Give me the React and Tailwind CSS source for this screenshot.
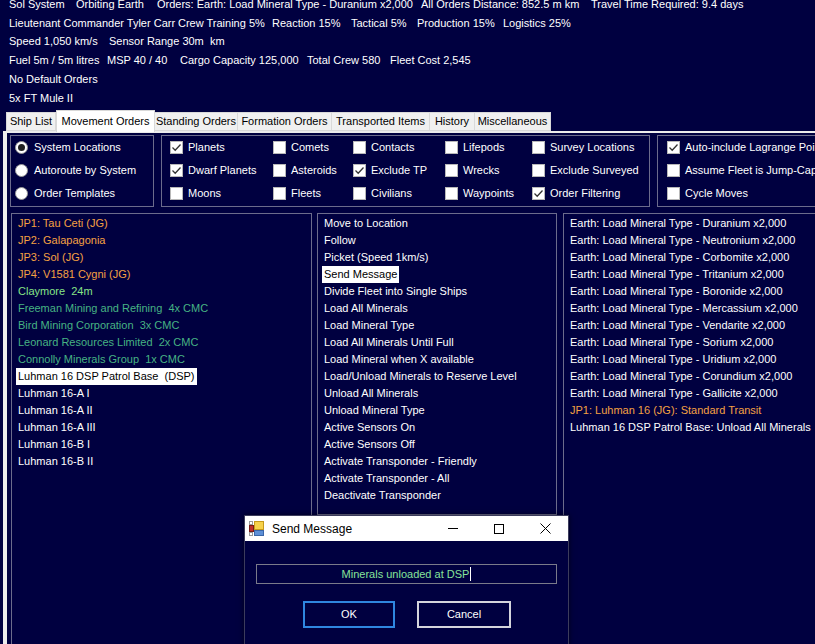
const headerLines = [
  [
    ['Sol System', 'w-[67px]'],
    ['Orbiting Earth', 'w-[81px]'],
    ['Orders: Earth: Load Mineral Type - Duranium x2,000', 'w-[264px]'],
    ['All Orders Distance: 852.5 m km', 'w-[170px]'],
    ['Travel Time Required: 9.4 days', ''],
  ],
  [
    ['Lieutenant Commander Tyler Carr', 'w-[169px]'],
    ['Crew Training 5%', 'w-[94px]'],
    ['Reaction 15%', 'w-[79px]'],
    ['Tactical 5%', 'w-[66px]'],
    ['Production 15%', 'w-[86px]'],
    ['Logistics 25%', ''],
  ],
  [
    ['Speed 1,050 km/s', 'w-[100px]'],
    ['Sensor Range 30m  km', ''],
  ],
  [
    ['Fuel 5m / 5m litres', 'w-[98px]'],
    ['MSP 40 / 40', 'w-[73px]'],
    ['Cargo Capacity 125,000', 'w-[127px]'],
    ['Total Crew 580', 'w-[83px]'],
    ['Fleet Cost 2,545', ''],
  ],
  [['No Default Orders', '']],
  [['5x FT Mule II', '']],
];

const tabs = [
  ['Ship List', 'w-[50px]'],
  ['Movement Orders', 'w-[99px]'],
  ['Standing Orders', 'w-[83px]'],
  ['Formation Orders', 'w-[94px]'],
  ['Transported Items', 'w-[98px]'],
  ['History', 'w-[45px]'],
  ['Miscellaneous', 'w-[76px]'],
];

const checkCols = [
  ['w-[103px]', [['Planets', true], ['Dwarf Planets', true], ['Moons', false]]],
  ['w-[80px]', [['Comets', false], ['Asteroids', false], ['Fleets', false]]],
  ['w-[92px]', [['Contacts', false], ['Exclude TP', true], ['Civilians', false]]],
  ['w-[87px]', [['Lifepods', false], ['Wrecks', false], ['Waypoints', false]]],
  ['', [['Survey Locations', false], ['Exclude Surveyed', false], ['Order Filtering', true]]],
];

const ORANGE = 'text-[#f5a142]';
const LIME = 'text-[#86e486]';
const TEAL = 'text-[#46b383]';

const locations = [
  ['JP1: Tau Ceti (JG)', ORANGE],
  ['JP2: Galapagonia', ORANGE],
  ['JP3: Sol (JG)', ORANGE],
  ['JP4: V1581 Cygni (JG)', ORANGE],
  ['Claymore  24m', LIME],
  ['Freeman Mining and Refining  4x CMC', TEAL],
  ['Bird Mining Corporation  3x CMC', TEAL],
  ['Leonard Resources Limited  2x CMC', TEAL],
  ['Connolly Minerals Group  1x CMC', TEAL],
  ['Luhman 16 DSP Patrol Base  (DSP)', 'text-white', true],
  ['Luhman 16-A I', 'text-white'],
  ['Luhman 16-A II', 'text-white'],
  ['Luhman 16-A III', 'text-white'],
  ['Luhman 16-B I', 'text-white'],
  ['Luhman 16-B II', 'text-white'],
];

const actions = [
  'Move to Location',
  'Follow',
  'Picket (Speed 1km/s)',
  'Send Message',
  'Divide Fleet into Single Ships',
  'Load All Minerals',
  'Load Mineral Type',
  'Load All Minerals Until Full',
  'Load Mineral when X available',
  'Load/Unload Minerals to Reserve Level',
  'Unload All Minerals',
  'Unload Mineral Type',
  'Active Sensors On',
  'Active Sensors Off',
  'Activate Transponder - Friendly',
  'Activate Transponder - All',
  'Deactivate Transponder',
];

const minerals = [
  'Duranium', 'Neutronium', 'Corbomite', 'Tritanium', 'Boronide', 'Mercassium',
  'Vendarite', 'Sorium', 'Uridium', 'Corundium', 'Gallicite',
];

const Checkbox = ({ checked }) => (
  <span className="w-[13px] h-[13px] bg-white border border-[#b8b8b8] flex items-center justify-center shrink-0">
    {checked && (
      <svg width="11" height="11" viewBox="0 0 11 11">
        <path d="M1.5 5.5 L4.2 8.2 L9.5 2.5" fill="none" stroke="#333" strokeWidth="1.3" />
      </svg>
    )}
  </span>
);

const Radio = ({ selected }) => (
  <span className="w-[13px] h-[13px] rounded-full bg-white border border-[#9a9a9a] flex items-center justify-center shrink-0">
    {selected && <span className="w-[7px] h-[7px] rounded-full bg-[#222]" />}
  </span>
);

const ListItem = ({ text, color = 'text-white', selected }) => (
  <div className="h-[17px] flex items-center">
    <span className={`px-[2px] leading-[17px] whitespace-pre ${selected ? 'bg-white text-black' : color}`}>
      {text}
    </span>
  </div>
);

const FormsIcon = () => (
  <svg width="15" height="15" viewBox="0 0 15 15">
    <rect x="0.5" y="0.5" width="3" height="3" fill="#fff" stroke="#999" />
    <rect x="0.5" y="11.5" width="3" height="3" fill="#fff" stroke="#999" />
    <rect x="0.5" y="4.5" width="4" height="6" fill="#c0302a" stroke="#7a1a16" />
    <rect x="5.5" y="0.5" width="9" height="8" fill="#f7d24a" stroke="#c79a1a" />
    <rect x="5.5" y="9.5" width="9" height="5" fill="#5d8fd6" stroke="#3a66a8" />
  </svg>
);

export default function App() {
  return (
    <div className="w-[815px] h-[644px] overflow-hidden relative bg-[#000040] text-white text-[11px] font-['Liberation_Sans',Arial,sans-serif] flex flex-col">
      {/* fleet summary */}
      <div className="-mt-[5px] pl-[9px] leading-[18.7px] shrink-0">
        {headerLines.map((line, i) => (
          <div key={i} className="flex whitespace-pre">
            {line.map(([t, w]) => (
              <span key={t} className={`${w} shrink-0`}>{t}</span>
            ))}
          </div>
        ))}
      </div>

      {/* tab strip */}
      <div className="flex items-end h-[22px] mt-[2px] pl-[6px] shrink-0 whitespace-nowrap">
        {tabs.map(([t, w], i) =>
          i === 1 ? (
            <div key={t} className={`${w} h-[22px] bg-white border border-b-0 border-[#d9d9d9] text-black flex items-center justify-center -mb-[1px] relative z-10 shrink-0`}>
              {t}
            </div>
          ) : (
            <div key={t} className={`${w} h-[19px] bg-[#f0f0f0] border border-[#d9d9d9] border-l-0 first:border-l text-black flex items-center justify-center shrink-0`}>
              {t}
            </div>
          )
        )}
      </div>

      {/* tab page */}
      <div className="flex-1 ml-[3px] border-l-[4px] border-t-[2px] border-[#ececec] pl-[3px] pt-[2px] flex flex-col gap-[6px] min-h-0">
        {/* option boxes */}
        <div className="flex gap-[7px] h-[72px] shrink-0">
          <div className="w-[144px] shrink-0 border border-[#6c6c8c] pl-[4px] flex flex-col">
            {[['System Locations', true], ['Autoroute by System', false], ['Order Templates', false]].map(([t, s]) => (
              <div key={t} className="h-[23px] flex items-center gap-[6px] whitespace-nowrap">
                <Radio selected={s} />
                <span>{t}</span>
              </div>
            ))}
          </div>
          <div className="w-[489px] shrink-0 border border-[#6c6c8c] pl-[8px] flex">
            {checkCols.map(([w, items], i) => (
              <div key={i} className={`${w} flex flex-col shrink-0`}>
                {items.map(([t, c]) => (
                  <div key={t} className="h-[23px] flex items-center gap-[5px] whitespace-nowrap">
                    <Checkbox checked={c} />
                    <span>{t}</span>
                  </div>
                ))}
              </div>
            ))}
          </div>
          <div className="flex-1 min-w-0 border border-[#6c6c8c] border-r-0 pl-[9px] flex flex-col overflow-hidden">
            {[['Auto-include Lagrange Points', true], ['Assume Fleet is Jump-Capable', false], ['Cycle Moves', false]].map(([t, c]) => (
              <div key={t} className="h-[23px] flex items-center gap-[5px] whitespace-nowrap">
                <Checkbox checked={c} />
                <span>{t}</span>
              </div>
            ))}
          </div>
        </div>

        {/* lists */}
        <div className="flex gap-[5px] flex-1 min-h-0 pl-[1px]">
          <div className="w-[301px] shrink-0 border border-[#6c6c8c] border-b-0 pl-[4px] pt-[1px]">
            {locations.map(([t, c, s]) => (
              <ListItem key={t} text={t} color={c} selected={s} />
            ))}
          </div>
          <div className="w-[240px] shrink-0 border border-[#6c6c8c] pl-[4px] pt-[1px] h-[302px]">
            {actions.map((t) => (
              <ListItem key={t} text={t} selected={t === 'Send Message'} />
            ))}
          </div>
          <div className="flex-1 min-w-0 overflow-hidden border border-[#6c6c8c] border-r-0 border-b-0 pl-[4px] pt-[1px] ml-[1px]">
            {minerals.map((m) => (
              <ListItem key={m} text={`Earth: Load Mineral Type - ${m} x2,000`} />
            ))}
            <ListItem text="JP1: Luhman 16 (JG): Standard Transit" color={ORANGE} />
            <ListItem text="Luhman 16 DSP Patrol Base: Unload All Minerals" />
          </div>
        </div>
      </div>

      {/* Send Message dialog */}
      <div className="absolute left-[244px] top-[515px] w-[325px] h-[140px] border border-[#3c3c5c] bg-[#000040] flex flex-col shadow-[0_0_6px_rgba(0,0,0,0.6)]">
        <div className="h-[25px] bg-white text-black flex items-center shrink-0 text-[12px]">
          <span className="ml-[4px] mr-[8px] flex"><FormsIcon /></span>
          <span className="flex-1">Send Message</span>
          <span className="w-[46px] flex justify-center">
            <span className="w-[10px] h-[1px] bg-black" />
          </span>
          <span className="w-[46px] flex justify-center">
            <span className="w-[10px] h-[10px] border border-black" />
          </span>
          <span className="w-[46px] flex justify-center">
            <svg width="11" height="11" viewBox="0 0 11 11">
              <path d="M0.5 0.5 L10.5 10.5 M10.5 0.5 L0.5 10.5" stroke="#000" strokeWidth="1" />
            </svg>
          </span>
        </div>
        <div className="px-[11px] pt-[23px]">
          <div className="h-[20px] border border-[#7a7a8a] flex items-center justify-center text-[#86e49a]">
            Minerals unloaded at DSP<span className="w-[1px] h-[14px] bg-white ml-[1px]" />
          </div>
          <div className="flex gap-[22px] mt-[17px] pl-[47px]">
            <div className="w-[92px] h-[27px] border-2 border-[#2f86e0] flex items-center justify-center">OK</div>
            <div className="w-[94px] h-[27px] border-2 border-[#d4d4dc] flex items-center justify-center">Cancel</div>
          </div>
        </div>
      </div>
    </div>
  );
}
